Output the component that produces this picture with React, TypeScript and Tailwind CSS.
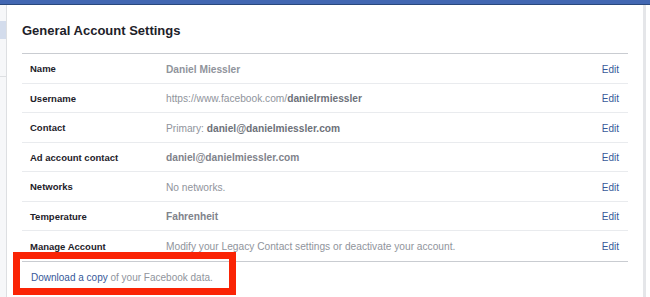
import React from 'react'

type Row = { label: string; value: React.ReactNode }

const rows: Row[] = [
  { label: 'Name', value: <span className="font-bold text-[#90949c]">Daniel Miessler</span> },
  {
    label: 'Username',
    value: (
      <>
        https://www.facebook.com/<span className="font-bold text-[#6d7179]">danielrmiessler</span>
      </>
    ),
  },
  {
    label: 'Contact',
    value: (
      <>
        Primary: <span className="font-bold text-[#6d7179]">daniel@danielmiessler.com</span>
      </>
    ),
  },
  { label: 'Ad account contact', value: <span className="font-bold text-[#7f838b]">daniel@danielmiessler.com</span> },
  { label: 'Networks', value: 'No networks.' },
  { label: 'Temperature', value: <span className="font-bold text-[#7f838b]">Fahrenheit</span> },
  { label: 'Manage Account', value: 'Modify your Legacy Contact settings or deactivate your account.' },
]

export default function App() {
  return (
    <div className="w-[650px] h-[297px] overflow-hidden bg-white flex flex-col font-['Liberation_Sans',Arial,sans-serif] relative">
      {/* top bar */}
      <div className="h-[5px] bg-[#4267b2] border-b border-[#29487d] shrink-0" />

      <div className="flex flex-1 min-h-0">
        {/* left nav sliver */}
        <div className="w-[7px] shrink-0 bg-[#f6f7f9] border-r border-[#dddfe2] flex flex-col">
          <div className="h-[16px]" />
          <div className="h-[18px] bg-[#d3dcec]" />
          <div className="h-[37px]" />
          <div className="h-px bg-[#dddfe2]" />
        </div>

        {/* settings panel */}
        <div className="flex-1 px-[15px] pt-[18px]">
          <h2 className="text-[13px] leading-[16px] font-bold text-[#1d2129]">General Account Settings</h2>

          <div className="mt-[14px] border-t border-[#c9ccd1] border-b">
            {rows.map((r, i) => (
              <div
                key={r.label}
                className={`flex items-center h-[29.5px] pt-[2px] pl-[8px] pr-[9px] ${i < rows.length - 1 ? 'border-b border-[#e9ebee]' : ''}`}
              >
                <div className="w-[136px] shrink-0 text-[9.5px] font-bold text-[#1d2129]">{r.label}</div>
                <div className="flex-1 text-[10.2px] text-[#90949c] whitespace-nowrap">{r.value}</div>
                <div className="text-[10px] text-[#365899]">Edit</div>
              </div>
            ))}
          </div>

          <div className="pl-[9px] mt-[10px] text-[10px] leading-[12px] text-[#90949c]">
            <span className="text-[#365899]">Download a copy</span> of your Facebook data.
          </div>
        </div>

        {/* right gutter */}
        <div className="w-[3px] shrink-0 bg-[#e5e6e9]" />
        <div className="w-[4px] shrink-0 bg-white" />
      </div>

      {/* highlight box */}
      <div className="absolute left-[13px] top-[252px] w-[223px] h-[43px] border-[7px] border-[#fa2405]" />
    </div>
  )
}
